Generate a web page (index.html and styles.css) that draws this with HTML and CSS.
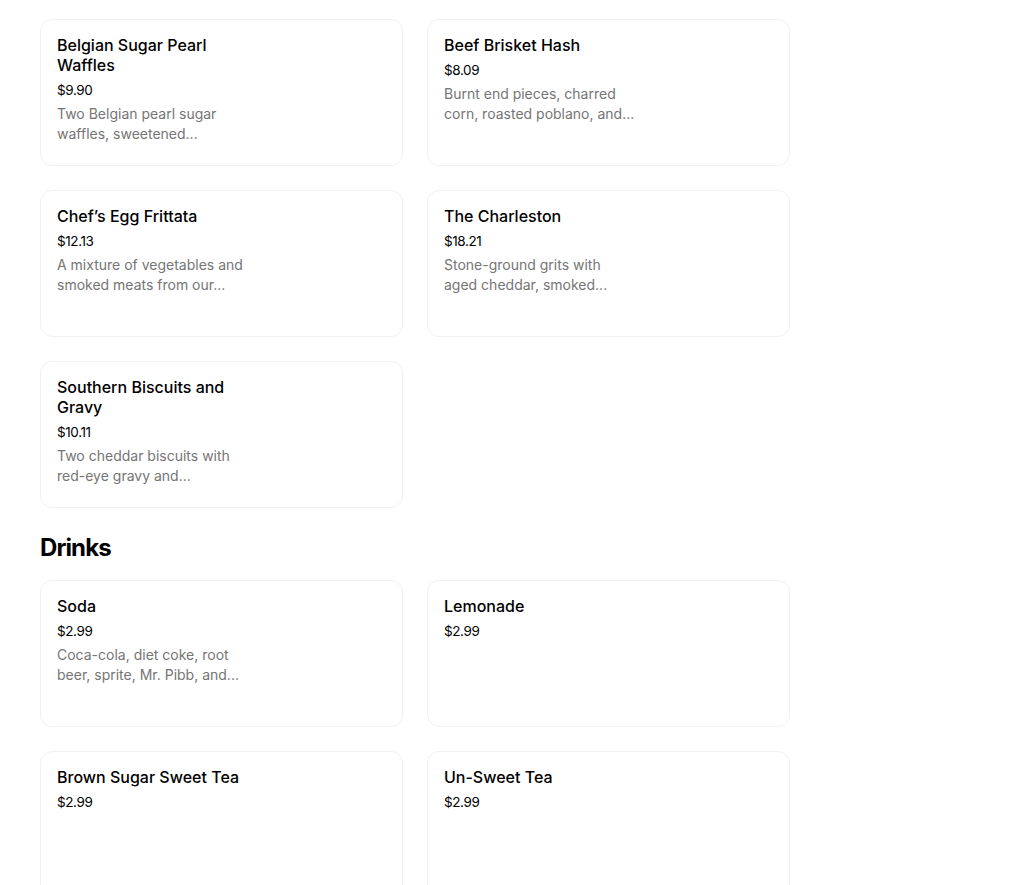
FILE: index.html
```html
<!DOCTYPE html>
<html lang="en">
<head>
<meta charset="utf-8">
<title>Menu</title>
<link rel="stylesheet" href="styles.css">
</head>
<body>
<main class="menu">
  <section class="section">
    <div class="grid">
      <div class="card"><div class="info"><h3 class="title">Belgian Sugar Pearl Waffles</h3><div class="price">$9.90</div><p class="desc">Two Belgian pearl sugar waffles, sweetened...</p></div></div>
      <div class="card"><div class="info"><h3 class="title">Beef Brisket Hash</h3><div class="price">$8.09</div><p class="desc">Burnt end pieces, charred corn, roasted poblano, and...</p></div></div>
      <div class="card"><div class="info"><h3 class="title">Chef’s Egg Frittata</h3><div class="price">$12.13</div><p class="desc">A mixture of vegetables and smoked meats from our...</p></div></div>
      <div class="card"><div class="info"><h3 class="title">The Charleston</h3><div class="price">$18.21</div><p class="desc">Stone-ground grits with aged cheddar, smoked...</p></div></div>
      <div class="card"><div class="info"><h3 class="title">Southern Biscuits and Gravy</h3><div class="price">$10.11</div><p class="desc">Two cheddar biscuits with red-eye gravy and...</p></div></div>
    </div>
  </section>
  <section class="section">
    <h2 class="section-title">Drinks</h2>
    <div class="grid">
      <div class="card"><div class="info"><h3 class="title">Soda</h3><div class="price">$2.99</div><p class="desc">Coca-cola, diet coke, root beer, sprite, Mr. Pibb, and...</p></div></div>
      <div class="card"><div class="info"><h3 class="title">Lemonade</h3><div class="price">$2.99</div></div></div>
      <div class="card"><div class="info"><h3 class="title">Brown Sugar Sweet Tea</h3><div class="price">$2.99</div></div></div>
      <div class="card"><div class="info"><h3 class="title">Un-Sweet Tea</h3><div class="price">$2.99</div></div></div>
    </div>
  </section>
</main>
</body>
</html>
```
FILE: styles.css
```css
* { box-sizing: border-box; }
html, body { margin: 0; background: #fff; }
body {
  font-family: Inter, "Noto Sans", "Liberation Sans", sans-serif;
  color: #000;
}
.menu {
  padding: 19px 40px 0;
  width: 830px;
}
.section + .section { margin-top: 24px; }
.section-title {
  margin: 0 0 16px;
  font-size: 24px;
  line-height: 32px;
  font-weight: 700;
  letter-spacing: -0.9px;
}
.grid {
  display: grid;
  grid-template-columns: 363px 363px;
  gap: 24px;
}
.card {
  height: 147px;
  border: 1px solid #f1f1f1;
  border-radius: 12px;
  padding: 15px 16px;
  display: flex;
}
.info { width: 192px; }
.title {
  margin: 0;
  font-size: 16px;
  line-height: 20px;
  font-weight: 500;
}
.price {
  margin-top: 5px;
  font-size: 13.5px;
  line-height: 20px;
  letter-spacing: -0.4px;
}
.desc {
  margin: 4px 0 0;
  font-size: 14px;
  line-height: 20px;
  color: #757575;
  max-height: 40px;
  overflow: hidden;
}
```
